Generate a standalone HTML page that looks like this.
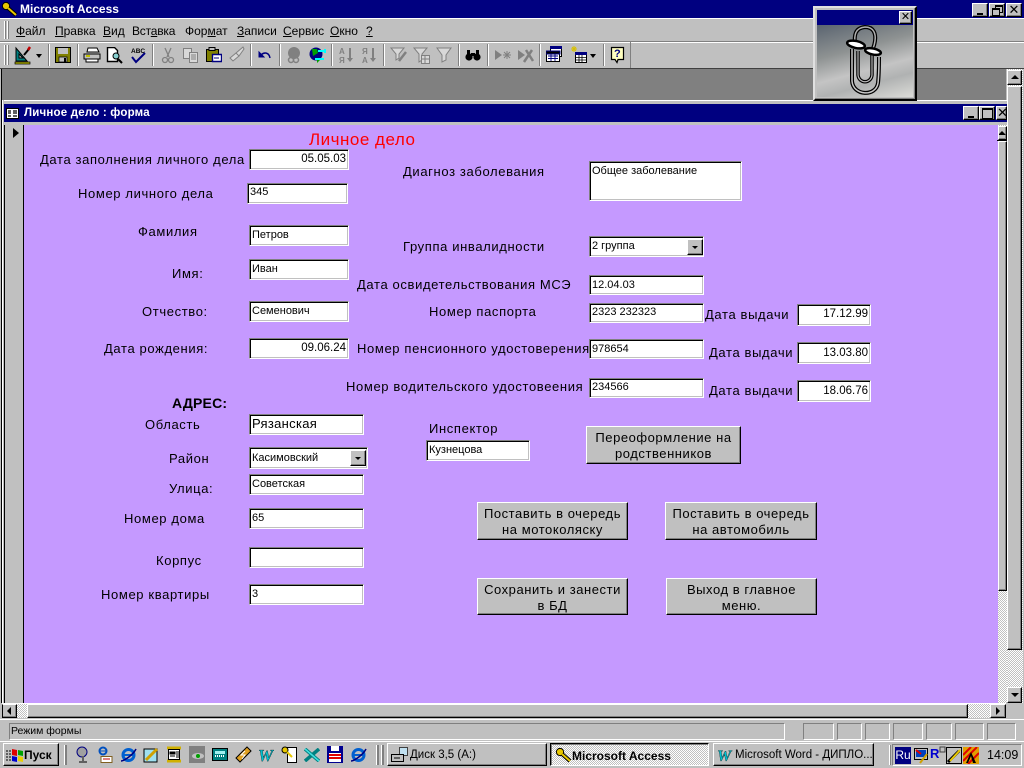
<!DOCTYPE html>
<html lang="ru"><head><meta charset="utf-8"><title>Microsoft Access</title>
<style>
html,body{margin:0;padding:0;width:1024px;height:768px;overflow:hidden;background:#c0c0c0}
body{position:relative;font-family:"Liberation Sans","DejaVu Sans",sans-serif;color:#000}
div,svg{position:absolute}
.nb{background:#000080}
.w{color:#fff;font-weight:bold;white-space:nowrap}
.t{white-space:nowrap;font-size:13px;line-height:16px;letter-spacing:.63px}
.m{white-space:nowrap;font-size:12px;line-height:14px;top:24px}
.f{background:#fff;border:1px solid;border-color:#808080 #fff #fff #808080;box-shadow:inset 1px 1px 0 #000,inset -1px -1px 0 #c0c0c0;box-sizing:border-box;font-size:11px;line-height:13px;padding:3px 2px 0;white-space:nowrap;overflow:hidden}
.r{text-align:right;font-size:11.5px}
.b{background:#c0c0c0;box-sizing:border-box;border:1px solid;border-color:#fff #000 #000 #fff;box-shadow:inset -1px -1px 0 #808080;font-size:13px;line-height:16px;text-align:center;letter-spacing:.55px;white-space:nowrap}
.btn{background:#c0c0c0;box-sizing:border-box;border:1px solid;border-color:#fff #000 #000 #fff;box-shadow:inset -1px -1px 0 #808080;text-align:center}
.sep{width:1px;background:#808080;border-right:1px solid #fff;top:44px;height:22px}
.d{background-color:#fff;background-image:linear-gradient(45deg,#c0c0c0 25%,transparent 25%,transparent 75%,#c0c0c0 75%),linear-gradient(45deg,#c0c0c0 25%,transparent 25%,transparent 75%,#c0c0c0 75%);background-size:2px 2px;background-position:0 0,1px 1px}
.sunk{box-sizing:border-box;border:1px solid;border-color:#808080 #fff #fff #808080}
</style></head><body>

<!-- main title bar -->
<div class="nb" style="left:0;top:0;width:1024px;height:18px"></div>
<svg style="left:1px;top:1px" width="17" height="16" viewBox="0 0 17 16"><circle cx="5" cy="5" r="3.6" fill="#e8c800" stroke="#000"/><path d="M7 7l8 7" stroke="#000" stroke-width="4"/><path d="M7 7l8 7" stroke="#e8c800" stroke-width="2"/></svg>
<div class="w" style="left:20px;top:2px;font-size:12px;line-height:14px">Microsoft Access</div>
<div class="btn" style="left:972px;top:3px;width:16px;height:14px"><div style="left:4px;top:9px;width:6px;height:2px;background:#000"></div></div>
<div class="btn" style="left:989px;top:3px;width:16px;height:14px"><div style="left:5px;top:1px;width:6px;height:5px;border:1px solid #000;border-top-width:2px"></div><div style="left:2px;top:4px;width:6px;height:5px;border:1px solid #000;border-top-width:2px;background:#c0c0c0"></div></div>
<div class="btn" style="left:1006px;top:3px;width:16px;height:14px;font-size:13px;line-height:12px;font-weight:bold">✕</div>

<!-- menu -->
<div style="left:0;top:18px;width:1024px;height:1px;background:#fff"></div>
<div style="left:0;top:41px;width:1024px;height:1px;background:#808080"></div>
<div style="left:0;top:42px;width:1024px;height:1px;background:#fff"></div>
<div style="left:4px;top:21px;width:1px;height:18px;background:#fff;border-right:1px solid #808080"></div>
<div style="left:7px;top:21px;width:1px;height:18px;background:#fff;border-right:1px solid #808080"></div>
<div class="m" style="left:16px"><u>Ф</u>айл</div>
<div class="m" style="left:55px"><u>П</u>равка</div>
<div class="m" style="left:103px"><u>В</u>ид</div>
<div class="m" style="left:132px;letter-spacing:-.2px">Вст<u>а</u>вка</div>
<div class="m" style="left:185px">Фор<u>м</u>ат</div>
<div class="m" style="left:237px"><u>З</u>аписи</div>
<div class="m" style="left:283px"><u>С</u>ервис</div>
<div class="m" style="left:330px"><u>О</u>кно</div>
<div class="m" style="left:366px"><u>?</u></div>

<!-- toolbar -->
<div style="left:4px;top:45px;width:1px;height:20px;background:#fff;border-right:1px solid #808080"></div>
<div style="left:7px;top:45px;width:1px;height:20px;background:#fff;border-right:1px solid #808080"></div>
<div class="sep" style="left:48px"></div><div class="sep" style="left:77px"></div><div class="sep" style="left:152px"></div><div class="sep" style="left:250px"></div><div class="sep" style="left:279px"></div><div class="sep" style="left:331px"></div><div class="sep" style="left:383px"></div><div class="sep" style="left:458px"></div><div class="sep" style="left:487px"></div><div class="sep" style="left:539px"></div><div class="sep" style="left:603px"></div>
<div style="left:630px;top:42px;width:1px;height:26px;background:#808080"></div>
<!-- icons -->
<svg style="left:14px;top:45px" width="18" height="20"><path d="M2 16V3l11 13z" fill="#008080" stroke="#000" stroke-width="1"/><path d="M5 13V9l4 4z" fill="#c0c0c0" stroke="#000"/><path d="M1 17h15v2H1z" fill="#c0c000" stroke="#000" stroke-width=".7"/><path d="M10 10l5-6" stroke="#000" stroke-width="2"/><path d="M14 5l2-3" stroke="#c00000" stroke-width="2.5"/></svg>
<div style="left:36px;top:54px;width:0;height:0;border:3.5px solid transparent;border-top:4px solid #000;border-bottom:0"></div>
<svg style="left:55px;top:47px" width="16" height="16"><path d="M.5.5h15v15H.5z" fill="#808000" stroke="#000"/><path d="M3 1h10v6H3z" fill="#c0c0c0"/><path d="M4 10h8v5H4z" fill="#c0c0c0" stroke="#000" stroke-width=".7"/><path d="M9 11h2v4H9z" fill="#000"/></svg>
<svg style="left:83px;top:47px" width="18" height="16"><path d="M5 1h9l2 4H4z" fill="#fff" stroke="#000"/><path d="M1 7h16v5H1z" fill="#c0c0c0" stroke="#000"/><path d="M3 12h12v3H3z" fill="#fff" stroke="#000"/><path d="M3 9h4" stroke="#c0c000" stroke-width="2"/></svg>
<svg style="left:106px;top:47px" width="18" height="17"><path d="M1.5.5h7l3 3v11h-10z" fill="#fff" stroke="#000" stroke-width="1.4"/><circle cx="10" cy="9" r="3" fill="#88d0d0" stroke="#000"/><path d="M12 12l4 4" stroke="#000" stroke-width="2"/></svg>
<svg style="left:130px;top:46px" width="17" height="18"><text x="1" y="7" font-size="6.5" font-weight="bold" font-family="Liberation Sans">ABC</text><path d="M2 11l4 5 9-9" fill="none" stroke="#000080" stroke-width="2"/></svg>
<svg style="left:161px;top:47px" width="14" height="18"><path d="M4 1l4 9M10 1L6 10" stroke="#808080" stroke-width="1.3"/><circle cx="4" cy="13" r="2.5" fill="none" stroke="#808080" stroke-width="1.3"/><circle cx="10" cy="13" r="2.5" fill="none" stroke="#808080" stroke-width="1.3"/></svg>
<svg style="left:182px;top:47px" width="17" height="16"><path d="M1.5 1.5h8v10h-8z" fill="#d8d8d8" stroke="#808080"/><path d="M7.5 5.5h8v10h-8z" fill="#d8d8d8" stroke="#808080"/><path d="M9 8h5M9 10h5M9 12h5" stroke="#808080"/></svg>
<svg style="left:205px;top:47px" width="17" height="16"><path d="M1.5 2.5h12v12h-12z" fill="#808000" stroke="#000"/><path d="M4 .5h6v3H4z" fill="#c0c0c0" stroke="#000"/><path d="M7.5 7.5h9v7h-9z" fill="#fff" stroke="#000080" stroke-width="1.4"/><path d="M9 11h5" stroke="#000080"/></svg>
<svg style="left:228px;top:46px" width="17" height="17"><path d="M15 1L8 7l3 3 5-7zM8 7l-6 5 3 3 6-5z" fill="#d8d8d8" stroke="#808080"/></svg>
<svg style="left:258px;top:50px" width="14" height="10"><path d="M1 2v5h5z" fill="#000080" stroke="#000080"/><path d="M3 5c3-3 8-3 9 3" fill="none" stroke="#000080" stroke-width="1.5"/></svg>
<svg style="left:286px;top:46px" width="17" height="18"><circle cx="8" cy="7" r="6" fill="#808080"/><circle cx="10" cy="14" r="2.5" fill="none" stroke="#808080" stroke-width="1.5"/><circle cx="5" cy="14" r="2.5" fill="none" stroke="#808080" stroke-width="1.5"/></svg>
<svg style="left:309px;top:46px" width="17" height="18"><circle cx="7" cy="8" r="6.5" fill="#000080"/><path d="M3 3l5 0 1 4-5 3zM8 12l3 2-3 3z" fill="#00a000"/><path d="M9 5h7M16 3v4M6 13h9" stroke="#00ffff" stroke-width="2"/></svg>
<svg style="left:338px;top:46px" width="18" height="18" font-family="Liberation Sans" font-size="8" font-weight="bold" fill="#808080"><text x="1" y="8">А</text><text x="1" y="17">Я</text><path d="M12 2v12" stroke="#808080" stroke-width="2"/><path d="M9 12h6l-3 4z"/></svg>
<svg style="left:361px;top:46px" width="18" height="18" font-family="Liberation Sans" font-size="8" font-weight="bold" fill="#808080"><text x="1" y="8">Я</text><text x="1" y="17">А</text><path d="M12 2v12" stroke="#808080" stroke-width="2"/><path d="M9 12h6l-3 4z"/></svg>
<svg style="left:390px;top:47px" width="18" height="17"><path d="M1 1h13L9 7v4l-3 2V7z" fill="#d8d8d8" stroke="#808080"/><path d="M9 14l7-9" stroke="#808080" stroke-width="2.5"/></svg>
<svg style="left:413px;top:47px" width="18" height="17"><path d="M1 1h13L9 7v6l-3 2V7z" fill="#d8d8d8" stroke="#808080"/><path d="M8.5 8.5h8v8h-8z" fill="#d8d8d8" stroke="#808080"/><path d="M9 12h7M12 9v7" stroke="#808080"/></svg>
<svg style="left:436px;top:47px" width="17" height="16"><path d="M1 1h14L10 8v5l-4 2V8z" fill="#d8d8d8" stroke="#808080"/></svg>
<svg style="left:465px;top:47px" width="16" height="15"><circle cx="4" cy="10" r="3.6"/><circle cx="12" cy="10" r="3.6"/><path d="M2 3h3v7H2zM11 3h3v7h-3zM6 6h4v3H6z"/></svg>
<svg style="left:494px;top:48px" width="17" height="14"><path d="M1 2l7 5-7 5z" fill="#808080"/><path d="M13 3v8M9 7h8M10 4l6 6M16 4l-6 6" stroke="#808080"/></svg>
<svg style="left:517px;top:48px" width="17" height="15"><path d="M1 2l7 5-7 5z" fill="#808080"/><path d="M7 14L15 2M9 2l7 11" stroke="#808080" stroke-width="2.5"/></svg>
<svg style="left:546px;top:46px" width="17" height="17"><path d="M4.5.5h11v10h-11z" fill="#fff" stroke="#000"/><path d="M4 0h12v3H4z" fill="#000080"/><path d="M.5 5.5h13v10H.5z" fill="#fff" stroke="#000"/><path d="M0 5h14v3H0zM2 10h10M2 12.5h10M5 8v7M9 8v7" stroke="#000080" stroke-width=".9"/></svg>
<svg style="left:569px;top:46px" width="18" height="18"><path d="M5 0v6M2 3h6M3 1l4 4M7 1L3 5" stroke="#d8c000"/><path d="M6.5 6.5h11v10h-11z" fill="#fff" stroke="#000"/><path d="M6 6h12v3H6z" fill="#000080"/><path d="M7 11.5h10M7 14h10M10 9v7M13 9v7" stroke="#000" stroke-width=".8"/></svg>
<div style="left:590px;top:54px;width:0;height:0;border:3.5px solid transparent;border-top:4px solid #000;border-bottom:0"></div>
<svg style="left:610px;top:46px" width="16" height="18"><path d="M1.5 1.5h12v12H8l-1 3-2-3H1.5z" fill="#ffffc0" stroke="#000" stroke-width="1.2"/><text x="4" y="11" font-size="11" font-weight="bold" fill="#000080" font-family="Liberation Sans">?</text></svg>

<!-- MDI area -->
<div style="left:0;top:68px;width:1024px;height:1px;background:#404040"></div>
<div style="left:1px;top:69px;width:1005px;height:31px;background:#808080"></div>
<div style="left:1px;top:69px;width:1px;height:650px;background:#000"></div>

<!-- Child window -->
<div style="left:2px;top:100px;width:1005px;height:4px;background:#c0c0c0;border-top:1px solid #fff;box-sizing:border-box"></div>
<div class="nb" style="left:4px;top:104px;width:1003px;height:18px"></div>
<div style="left:2px;top:100px;width:2px;height:604px;background:#c0c0c0;border-left:1px solid #fff;box-sizing:border-box"></div>
<div style="left:4px;top:122px;width:1003px;height:3px;background:#c0c0c0"></div>
<svg style="left:6px;top:108px" width="13" height="11"><path d="M.5.5h12v10H.5z" fill="#fff" stroke="#000"/><path d="M2 3h3M2 5h3M2 8h3M7 3h4M7 5h4M7 8h4" stroke="#000" stroke-width="1.3"/></svg>
<div class="w" style="left:24px;top:106px;font-size:11.5px;line-height:14px;letter-spacing:.2px">Личное дело : форма</div>
<div class="btn" style="left:963px;top:106px;width:16px;height:14px"><div style="left:4px;top:9px;width:6px;height:2px;background:#000"></div></div>
<div class="btn" style="left:979px;top:106px;width:16px;height:14px"><div style="left:2px;top:1px;width:9px;height:8px;border:1px solid #000;border-top-width:2px"></div></div>
<div class="btn" style="left:996px;top:106px;width:11px;height:14px;font-size:13px;line-height:12px;font-weight:bold;overflow:hidden;text-align:left">✕</div>

<!-- Record selector -->
<div style="left:4px;top:125px;width:19px;height:579px;background:#c0c0c0"></div>
<div style="left:4px;top:125px;width:1px;height:579px;background:#000"></div>
<div style="left:23px;top:125px;width:1px;height:579px;background:#000"></div>
<div style="left:13px;top:128px;width:0;height:0;border-top:5px solid transparent;border-bottom:5px solid transparent;border-left:6px solid #000"></div>

<!-- Form body -->
<div style="left:24px;top:125px;width:974px;height:579px;background:#c599ff"></div>

<!-- form scrollbar -->
<div class="d" style="left:998px;top:125px;width:9px;height:579px"></div>
<div class="btn" style="left:998px;top:126px;width:9px;height:14px;overflow:hidden"><div style="left:-1px;top:4px;width:0;height:0;border-left:4px solid transparent;border-right:4px solid transparent;border-bottom:4px solid #000"></div></div>
<div style="left:997px;top:140px;width:10px;height:1px;background:#000"></div>
<div class="btn" style="left:998px;top:141px;width:9px;height:450px"></div>

<!-- outer vertical scrollbar -->
<div class="d" style="left:1007px;top:69px;width:16px;height:634px"></div>
<div class="btn" style="left:1007px;top:70px;width:15px;height:15px"><div style="left:3px;top:4px;width:0;height:0;border-left:4px solid transparent;border-right:4px solid transparent;border-bottom:4px solid #000"></div></div>
<div class="btn" style="left:1007px;top:86px;width:15px;height:564px"></div>
<div class="btn" style="left:1007px;top:687px;width:15px;height:16px"><div style="left:3px;top:5px;width:0;height:0;border-left:4px solid transparent;border-right:4px solid transparent;border-top:4px solid #000"></div></div>

<!-- horizontal scrollbar -->
<div style="left:0;top:703px;width:1024px;height:16px;background:#c0c0c0"></div>
<div style="left:2px;top:703px;width:1004px;height:1px;background:#fff"></div>
<div class="d" style="left:17px;top:704px;width:989px;height:14px"></div>
<div class="btn" style="left:2px;top:704px;width:15px;height:14px;border-color:#fff #000 #000 #000"><div style="left:4px;top:2px;width:0;height:0;border-top:4px solid transparent;border-bottom:4px solid transparent;border-right:4px solid #000"></div></div>
<div class="btn" style="left:27px;top:704px;width:941px;height:14px"></div>
<div class="btn" style="left:990px;top:704px;width:16px;height:14px"><div style="left:5px;top:2px;width:0;height:0;border-top:4px solid transparent;border-bottom:4px solid transparent;border-left:4px solid #000"></div></div>

<!-- Form content -->
<div style="left:309px;top:130px;font-size:17px;line-height:19px;color:#ff0000;white-space:nowrap;letter-spacing:.5px">Личное дело</div>

<div class="t" style="left:40px;top:152px">Дата заполнения личного дела</div>
<div class="t" style="left:78px;top:186px">Номер личного дела</div>
<div class="t" style="left:138px;top:224px">Фамилия</div>
<div class="t" style="left:172px;top:266px">Имя:</div>
<div class="t" style="left:142px;top:304px">Отчество:</div>
<div class="t" style="left:104px;top:341px">Дата рождения:</div>
<div class="t" style="left:172px;top:395px;font-weight:bold;font-size:14px;letter-spacing:.2px">АДРЕС:</div>
<div class="t" style="left:145px;top:417px">Область</div>
<div class="t" style="left:169px;top:451px">Район</div>
<div class="t" style="left:169px;top:481px">Улица:</div>
<div class="t" style="left:124px;top:511px">Номер дома</div>
<div class="t" style="left:156px;top:553px">Корпус</div>
<div class="t" style="left:101px;top:587px">Номер квартиры</div>

<div class="t" style="left:403px;top:164px">Диагноз заболевания</div>
<div class="t" style="left:403px;top:239px">Группа инвалидности</div>
<div class="t" style="left:357px;top:277px">Дата освидетельствования МСЭ</div>
<div class="t" style="left:429px;top:304px">Номер паспорта</div>
<div class="t" style="left:357px;top:341px">Номер пенсионного удостоверения</div>
<div class="t" style="left:346px;top:379px">Номер водительского удостовеения</div>
<div class="t" style="left:705px;top:307px">Дата выдачи</div>
<div class="t" style="left:709px;top:345px">Дата выдачи</div>
<div class="t" style="left:709px;top:383px">Дата выдачи</div>
<div class="t" style="left:429px;top:421px">Инспектор</div>

<div class="f r" style="left:249px;top:149px;width:100px;height:21px">05.05.03</div>
<div class="f" style="left:247px;top:183px;width:101px;height:21px;padding-top:2px">345</div>
<div class="f" style="left:249px;top:225px;width:100px;height:21px">Петров</div>
<div class="f" style="left:249px;top:259px;width:100px;height:21px">Иван</div>
<div class="f" style="left:249px;top:301px;width:100px;height:21px">Семенович</div>
<div class="f r" style="left:249px;top:338px;width:100px;height:21px">09.06.24</div>
<div class="f" style="left:249px;top:414px;width:115px;height:21px;font-size:13px;line-height:16px;letter-spacing:.3px;padding-top:1px">Рязанская</div>
<div class="f" style="left:249px;top:447px;width:119px;height:22px;padding-top:4px">Касимовский<div class="btn" style="left:100px;top:2px;width:16px;height:16px"><div style="left:4px;top:6px;width:0;height:0;border-left:3px solid transparent;border-right:3px solid transparent;border-top:3px solid #000"></div></div></div>
<div class="f" style="left:249px;top:474px;width:115px;height:21px">Советская</div>
<div class="f" style="left:249px;top:508px;width:115px;height:21px">65</div>
<div class="f" style="left:249px;top:547px;width:115px;height:21px"></div>
<div class="f" style="left:249px;top:584px;width:115px;height:21px">3</div>

<div class="f" style="left:589px;top:161px;width:153px;height:40px">Общее заболевание</div>
<div class="f" style="left:589px;top:236px;width:115px;height:21px">2 группа<div class="btn" style="left:97px;top:2px;width:16px;height:16px"><div style="left:4px;top:6px;width:0;height:0;border-left:3px solid transparent;border-right:3px solid transparent;border-top:3px solid #000"></div></div></div>
<div class="f" style="left:589px;top:275px;width:115px;height:20px">12.04.03</div>
<div class="f" style="left:589px;top:303px;width:115px;height:20px;padding-top:2px">2323 232323</div>
<div class="f" style="left:589px;top:339px;width:115px;height:20px">978654</div>
<div class="f" style="left:589px;top:378px;width:115px;height:20px;padding-top:2px">234566</div>
<div class="f r" style="left:797px;top:304px;width:74px;height:22px">17.12.99</div>
<div class="f r" style="left:797px;top:342px;width:74px;height:22px;padding-top:4px">13.03.80</div>
<div class="f r" style="left:797px;top:380px;width:74px;height:22px;padding-top:4px">18.06.76</div>
<div class="f" style="left:426px;top:440px;width:104px;height:21px">Кузнецова</div>

<div class="b" style="left:586px;top:426px;width:155px;height:38px;padding-top:3px">Переоформление на<br>родственников</div>
<div class="b" style="left:477px;top:502px;width:151px;height:38px;padding-top:3px">Поставить в очередь<br>на мотоколяску</div>
<div class="b" style="left:665px;top:502px;width:152px;height:38px;padding-top:3px">Поставить в очередь<br>на автомобиль</div>
<div class="b" style="left:477px;top:578px;width:151px;height:37px;padding-top:3px">Сохранить и занести<br>в БД</div>
<div class="b" style="left:666px;top:578px;width:151px;height:37px;padding-top:3px">Выход в главное<br>меню.</div>

<!-- Office assistant -->
<div style="left:813px;top:6px;width:104px;height:95px;background:#c0c0c0;box-sizing:border-box;border:2px solid;border-color:#e0e0e0 #000 #000 #e0e0e0;box-shadow:inset -1px -1px 0 #808080"></div>
<div class="nb" style="left:817px;top:10px;width:96px;height:15px"></div>
<div class="btn" style="left:899px;top:11px;width:13px;height:13px;font-size:11px;line-height:10px;font-weight:bold">✕</div>
<div style="left:817px;top:25px;width:96px;height:72px;background:linear-gradient(165deg,#5a6470 0%,#8e9292 35%,#c4c4c4 60%,#b0b2b2 75%,#dcdcd8 100%)"></div>
<svg style="left:817px;top:25px" width="96" height="72" viewBox="0 0 96 72" fill="none">
<path d="M38 20C37 10 38 3 48 2c9 0 11 7 10 14s-3 9-5 12" stroke="#000" stroke-width="4"/>
<path d="M38 20C37 10 38 3 48 2c9 0 11 7 10 14s-3 9-5 12" stroke="#b0b0b0" stroke-width="1.5"/>
<path d="M41 26v24c1 9 13 9 14 0V28" stroke="#000" stroke-width="3.5"/>
<path d="M41 26v24c1 9 13 9 14 0V28" stroke="#b8b8b8" stroke-width="1.2"/>
<path d="M35 24v32c1 15 24 16 26 2 1-9 1-18 1-26" stroke="#000" stroke-width="4"/>
<path d="M35 24v32c1 15 24 16 26 2 1-9 1-18 1-26" stroke="#c8c8c8" stroke-width="1.5"/>
<ellipse cx="39" cy="19.500" rx="9" ry="3.500" fill="#fff" stroke="#000" stroke-width="2.500" transform="rotate(12 39 19.500)"/>
<ellipse cx="56" cy="26.500" rx="8" ry="3" fill="#fff" stroke="#000" stroke-width="2.500" transform="rotate(12 56 26.500)"/>
</svg>

<!-- status bar -->
<div style="left:0;top:719px;width:1024px;height:25px;background:#c0c0c0"></div>
<div style="left:0;top:719px;width:1024px;height:1px;background:#fff"></div>
<div class="sunk" style="left:9px;top:723px;width:776px;height:17px;font-size:10.500px;line-height:15px;white-space:nowrap;padding-left:1px">Режим формы</div>
<div class="sunk" style="left:803px;top:723px;width:31px;height:17px"></div>
<div class="sunk" style="left:837px;top:723px;width:25px;height:17px"></div>
<div class="sunk" style="left:865px;top:723px;width:25px;height:17px"></div>
<div class="sunk" style="left:893px;top:723px;width:30px;height:17px"></div>
<div class="sunk" style="left:926px;top:723px;width:26px;height:17px"></div>
<div class="sunk" style="left:955px;top:723px;width:29px;height:17px"></div>
<div class="sunk" style="left:987px;top:723px;width:29px;height:17px"></div>

<!-- taskbar -->
<div style="left:0;top:741px;width:1024px;height:1px;background:#fff"></div>
<div class="btn" style="left:3px;top:743px;width:56px;height:23px"></div>
<svg style="left:6px;top:748px" width="18" height="15"><path d="M6 1l5 1v6l-5-1z" fill="#e00000"/><path d="M12 2l5 1v5l-5-1z" fill="#00a000"/><path d="M6 8l5 1v5l-5-1z" fill="#0000d0"/><path d="M12 8l5 1v5l-5-1z" fill="#e8d000"/><path d="M0 3h5M0 6h5M0 9h5M0 12h5" stroke="#000" stroke-dasharray="2 1"/></svg>
<div style="left:24px;top:748px;font-size:12px;line-height:14px;font-weight:bold">Пуск</div>
<div style="left:64px;top:745px;width:1px;height:20px;background:#808080;border-left:1px solid #fff;border-right:1px solid #808080"></div>
<div style="left:376px;top:745px;width:1px;height:20px;background:#808080;border-left:1px solid #fff;border-right:1px solid #808080"></div>
<div style="left:381px;top:745px;width:1px;height:20px;background:#808080;border-left:1px solid #fff;border-right:1px solid #808080"></div>

<svg style="left:75px;top:746px" width="16" height="18"><circle cx="7" cy="6" r="5" fill="#a0a0a0" stroke="#000080"/><path d="M8 10v5M4 16h8" stroke="#606060" stroke-width="2"/></svg>
<svg style="left:97px;top:746px" width="17" height="18"><circle cx="6" cy="5" r="3.500" fill="none" stroke="#0050c0" stroke-width="2"/><path d="M3 5h6" stroke="#0050c0"/><path d="M4 10.500h11v6H4z" fill="#fff" stroke="#806020"/><path d="M6 13h7" stroke="#c00000"/></svg>
<svg style="left:120px;top:746px" width="17" height="17"><circle cx="8.500" cy="9" r="5.500" fill="none" stroke="#0060d0" stroke-width="3"/><path d="M4 9h9" stroke="#0060d0" stroke-width="2"/><path d="M1 15C4 15 13 9 16 3" fill="none" stroke="#000080" stroke-width="1.500"/></svg>
<svg style="left:143px;top:747px" width="17" height="16"><path d="M1 2h13v13H1z" fill="#a0e0f0" stroke="#000"/><path d="M3 13l11-11" stroke="#d0a000" stroke-width="3"/></svg>
<svg style="left:166px;top:746px" width="16" height="17"><path d="M1 2h14M1 15h14" stroke="#d0b000" stroke-width="3"/><path d="M2.500 3.500h11v10h-11z" fill="#fff" stroke="#000"/><path d="M4 6h5v2H4zM4 10h5M11 5v7M13 5v7" stroke="#000"/></svg>
<svg style="left:189px;top:746px" width="16" height="17"><path d="M0 0h16v17H0z" fill="#808080"/><ellipse cx="9" cy="10" rx="6" ry="3" fill="#c0c0c0"/><circle cx="9" cy="10" r="2" fill="#00a000"/></svg>
<svg style="left:212px;top:748px" width="16" height="13"><path d="M.5.500h15v12H.5z" fill="#008080" stroke="#000"/><path d="M3 3h10v3H3z" fill="#a0f0f0"/><path d="M3 8h10" stroke="#fff" stroke-dasharray="1 1" stroke-width="2"/></svg>
<svg style="left:235px;top:746px" width="17" height="17"><path d="M12 1L1 12l4 4L16 5z" fill="#e0a020" stroke="#000"/><path d="M10 5L6 9h4l-3 4" stroke="#fff" fill="none"/></svg>
<svg style="left:258px;top:747px" width="16" height="15"><text x="0" y="14" font-size="17" font-weight="bold" font-style="italic" fill="#00c0d0" stroke="#000" stroke-width=".3" font-family="Liberation Serif">W</text></svg>
<svg style="left:281px;top:746px" width="17" height="17"><path d="M6.500 1.500h9v15h-9z" fill="#fff" stroke="#000"/><circle cx="4" cy="4" r="3" fill="#e8c800" stroke="#000"/><path d="M6 6l5 5" stroke="#e8c800" stroke-width="2"/></svg>
<svg style="left:304px;top:748px" width="16" height="14"><path d="M1 1l14 12M15 1L1 13" stroke="#008080" stroke-width="3.500"/><path d="M1 1l14 12" stroke="#40e0e0" stroke-width="1.500"/></svg>
<svg style="left:327px;top:746px" width="16" height="17"><path d="M0 0h16v17H0z" fill="#000090"/><path d="M4 0h8v5H4z" fill="#fff"/><path d="M2 7h12v9H2z" fill="#fff"/><path d="M2 9h12M2 12h12" stroke="#e00000" stroke-width="2"/></svg>
<svg style="left:350px;top:746px" width="17" height="17"><circle cx="8.500" cy="9" r="5.500" fill="none" stroke="#0060d0" stroke-width="3"/><path d="M4 9h9" stroke="#0060d0" stroke-width="2"/><path d="M1 15C4 15 13 9 16 3" fill="none" stroke="#000080" stroke-width="1.500"/></svg>

<div class="btn" style="left:387px;top:743px;width:160px;height:23px;font-size:11.500px;line-height:23px;text-align:left;padding-left:22px;white-space:nowrap">Диск 3,5 (A:)</div>
<svg style="left:391px;top:747px" width="18" height="16"><path d="M8.500.500h8v8h-8z" fill="#c0e0f0" stroke="#404040"/><path d="M.5 7.500h12v7H.5z" fill="#c0c0c0" stroke="#000"/><path d="M3 11h6" stroke="#000"/></svg>
<div class="d" style="left:550px;top:743px;width:159px;height:23px;box-sizing:border-box;border:1px solid;border-color:#000 #fff #fff #000;box-shadow:inset 1px 1px 0 #808080"></div>
<svg style="left:555px;top:747px" width="17" height="16"><circle cx="5" cy="5" r="3.600" fill="#e8c800" stroke="#000"/><path d="M7 7l8 7" stroke="#000" stroke-width="4"/><path d="M7 7l8 7" stroke="#e8c800" stroke-width="2"/></svg>
<div style="left:572px;top:749px;font-size:12px;line-height:14px;font-weight:bold;white-space:nowrap">Microsoft Access</div>
<div class="btn" style="left:713px;top:743px;width:161px;height:23px;font-size:11.500px;line-height:22px;text-align:left;padding-left:21px;white-space:nowrap;overflow:hidden">Microsoft Word - ДИПЛО...</div>
<svg style="left:717px;top:748px" width="16" height="15"><text x="0" y="13" font-size="16" font-weight="bold" font-style="italic" fill="#00c0d0" stroke="#000" stroke-width=".3" font-family="Liberation Serif">W</text></svg>
<div style="left:889px;top:745px;width:1px;height:20px;background:#808080;border-left:1px solid #fff"></div>
<div class="sunk" style="left:892px;top:744px;width:130px;height:22px"></div>
<div style="left:895px;top:747px;width:16px;height:17px;background:#000080;color:#fff;font-size:12px;line-height:16px;text-align:center">Ru</div>
<svg style="left:913px;top:747px" width="16" height="17"><path d="M1.500 1.500h13v11h-13z" fill="#c0c0c0" stroke="#000"/><path d="M3 3h10v7H3z" fill="#0040c0"/><path d="M3 3l5 4" stroke="#e00000" stroke-width="2"/><path d="M7 16l7-9" stroke="#d0a000" stroke-width="2"/></svg>
<svg style="left:930px;top:746px" width="16" height="16"><text x="0" y="12" font-size="13" font-weight="bold" fill="#0000d0" font-family="Liberation Sans">R</text><path d="M10 1h5v5h-5z" fill="#c0c0c0" stroke="#404040"/></svg>
<svg style="left:946px;top:747px" width="16" height="17"><path d="M.5.500h15v16H.5z" fill="#c0c0c0" stroke="#000"/><path d="M2 15L13 4" stroke="#000" stroke-width="3"/><path d="M4 14L14 3" stroke="#e8c800" stroke-width="2"/></svg>
<svg style="left:963px;top:747px" width="16" height="17"><path d="M0 0h16v17H0z" fill="#e0a000"/><path d="M0 8l8-8M0 14L14 0M5 17L16 6" stroke="#e00000" stroke-width="2"/><path d="M8 5l-5 11h2l3-7 2 7h3z" fill="#000"/></svg>
<div style="left:987px;top:748px;font-size:12.500px;line-height:14px;white-space:nowrap">14:09</div>
</body></html>
